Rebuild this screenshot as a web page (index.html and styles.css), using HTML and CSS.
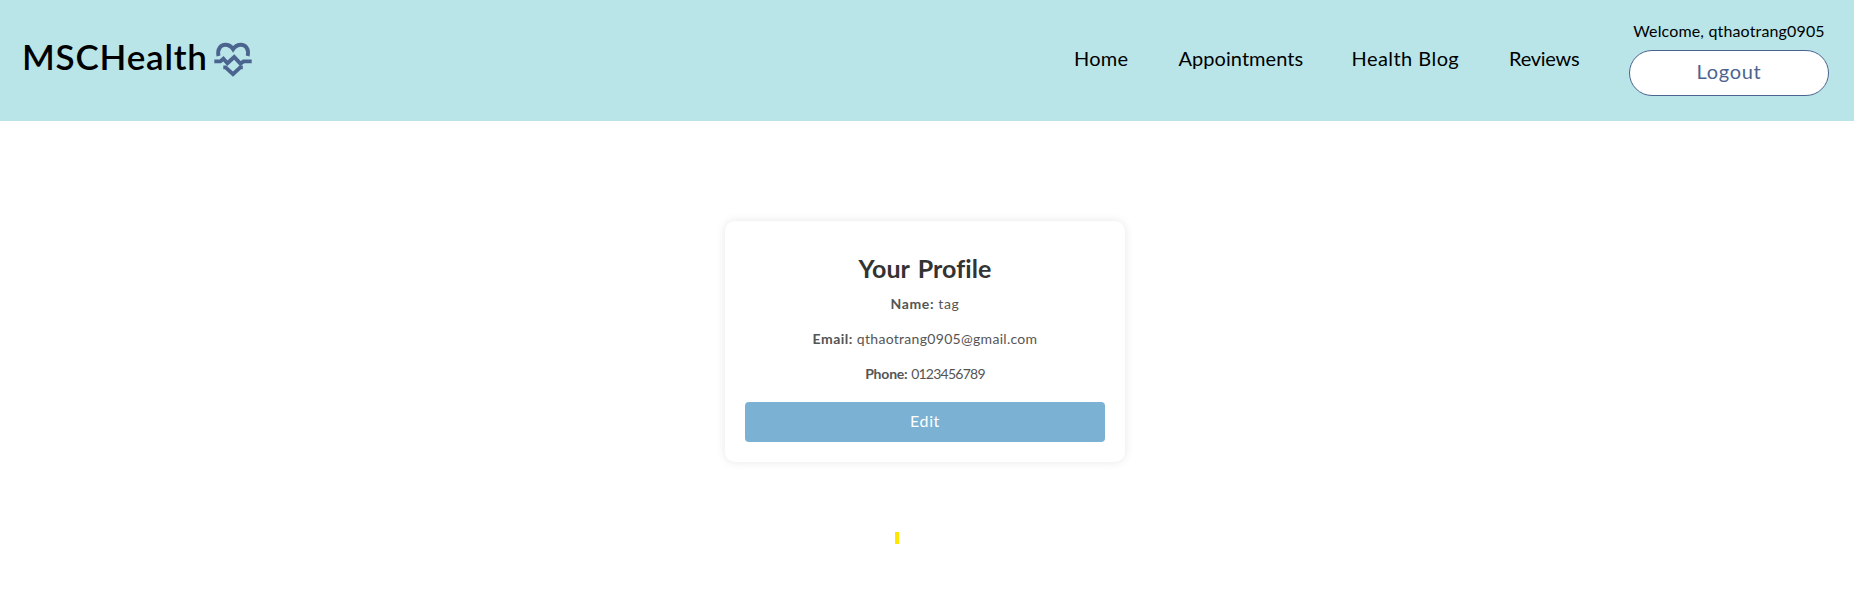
FILE: index.html
```
<!DOCTYPE html>
<html lang="en">
<head>
<meta charset="utf-8">
<title>MSCHealth</title>
<link rel="stylesheet" href="styles.css">
</head>
<body>
<header class="header">
  <a class="brand"><span class="brand-name">MSCHealth</span>
    <svg class="brand-icon" viewBox="0 0 38 36" fill="none" stroke="#4b648f" stroke-width="3.9">
      <path d="M4.5 14C3 6.7 7 2.8 11.3 2.8C15 2.8 17.3 4.4 19.1 7.2C21 4.4 23.4 2.8 27 2.8C31.4 2.8 35.2 6.7 33.7 14"/>
      <path d="M.3 19.4H6.3L9.4 16.8L13.4 21.2L20.2 15L26.4 21.6L29.6 19.4H37.7"/>
      <path d="M9.3 25.4H11.6L19 32.2L26.3 25.4H28.8"/>
    </svg>
  </a>
  <nav class="nav">
    <a class="link home">Home</a><a class="link appointments">Appointments</a><a class="link blog">Health Blog</a><a class="link reviews">Reviews</a>
  </nav>
  <div class="account">
    <span class="welcome">Welcome, qthaotrang0905</span>
    <button class="logout">Logout</button>
  </div>
</header>
<main class="main">
  <section class="card">
    <h2 class="title">Your Profile</h2>
    <p class="row name"><strong>Name:</strong> tag</p>
    <p class="row email"><strong>Email:</strong> qthaotrang0905@gmail.com</p>
    <p class="row phone"><strong>Phone:</strong> <span class="digits">0123456789</span></p>
    <button class="edit">Edit</button>
  </section>
  <div class="marker"></div>
</main>
</body>
</html>
```
FILE: styles.css
```
* { box-sizing: border-box; }
body { margin: 0; background: #fff; font-family: Lato, sans-serif; color: #000; }
.header { display: flex; height: 121px; background: #b9e5e8; padding: 0 25px 0 22px; }
.brand { display: flex; align-items: flex-start; padding-top: 36px; }
.brand-name { width: 184px; font-size: 35px; font-weight: 600; line-height: 41px; letter-spacing: .8px; white-space: nowrap; }
.brand-icon { width: 38px; height: 36px; margin: 6px 0 0 8px; }
.nav { display: flex; gap: 50px; margin-left: auto; padding-top: 46px; }
.link { font-size: 20px; line-height: 25px; white-space: nowrap; }
.home { width: 54.5px; letter-spacing: .25px; }
.appointments { width: 123px; letter-spacing: .05px; }
.blog { width: 107.5px; letter-spacing: .45px; }
.reviews { width: 70px; letter-spacing: -.25px; }
.account { width: 200px; margin-left: 50px; padding-top: 20px; text-align: center; }
.welcome { display: block; height: 30px; font-size: 16px; line-height: 21px; letter-spacing: .15px; white-space: nowrap; }
.logout { display: block; width: 200px; height: 46px; border: 1px solid #4b648f; border-radius: 23px; background: #fff; color: #4b648f; font: 20px/25px Lato, sans-serif; letter-spacing: .7px; padding: 0 0 3px; }
.main { display: flex; flex-direction: column; align-items: center; padding-top: 100px; }
.card { width: 400px; height: 241px; margin-right: 4px; padding: 32px 20px 20px; border-radius: 10px; box-shadow: 0 0 10px rgba(0,0,0,.1); text-align: center; }
.title { margin: 0 0 3px; font-size: 25px; line-height: 30px; letter-spacing: .1px; word-spacing: 2px; color: #333; }
.row { margin: 0; font-size: 14px; line-height: 35px; color: #555; }
.name { letter-spacing: .6px; }
.email { letter-spacing: .3px; }
.email strong { letter-spacing: .5px; }
.phone strong { letter-spacing: -.2px; }
.digits { letter-spacing: -.75px; }
.edit { display: block; width: 360px; height: 40px; margin-top: 11px; border: 0; border-radius: 4px; padding: 0 0 3px; background: #7bb1d3; color: #fff; font: 16px/20px Lato, sans-serif; letter-spacing: .6px; }
.marker { width: 4px; height: 12px; margin: 70px 60px 0 0; background: #ffe600; }
```
